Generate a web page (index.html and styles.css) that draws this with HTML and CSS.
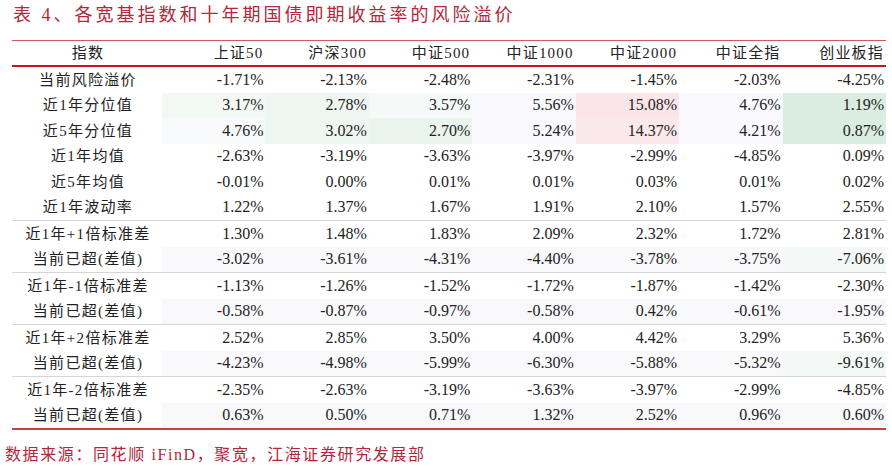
FILE: index.html
```html
<!DOCTYPE html>
<html lang="zh">
<head>
<meta charset="utf-8">
<title>表4</title>
<link rel="stylesheet" href="styles.css">
</head>
<body>
<div class="title">表 4、各宽基指数和十年期国债即期收益率的风险溢价</div>
<table class="tbl">
  <colgroup>
    <col class="c-label">
    <col class="c-val"><col class="c-val"><col class="c-val"><col class="c-val"><col class="c-val"><col class="c-val"><col class="c-val">
  </colgroup>
  <thead>
    <tr><th class="lbl">指数</th><th>上证50</th><th>沪深300</th><th>中证500</th><th>中证1000</th><th>中证2000</th><th>中证全指</th><th>创业板指</th></tr>
  </thead>
  <tbody>
    <tr><td class="lbl">当前风险溢价</td><td>-1.71%</td><td>-2.13%</td><td>-2.48%</td><td>-2.31%</td><td>-1.45%</td><td>-2.03%</td><td>-4.25%</td></tr>
    <tr><td class="lbl">近1年分位值</td><td class="g1">3.17%</td><td class="g2">2.78%</td><td class="g0">3.57%</td><td class="lv">5.56%</td><td class="p1">15.08%</td><td class="lv">4.76%</td><td class="g3">1.19%</td></tr>
    <tr><td class="lbl">近5年分位值</td><td class="lv2">4.76%</td><td class="g2">3.02%</td><td class="g2b">2.70%</td><td class="lv">5.24%</td><td class="p2">14.37%</td><td class="lv">4.21%</td><td class="g3">0.87%</td></tr>
    <tr><td class="lbl">近1年均值</td><td>-2.63%</td><td>-3.19%</td><td>-3.63%</td><td>-3.97%</td><td>-2.99%</td><td>-4.85%</td><td>0.09%</td></tr>
    <tr><td class="lbl">近5年均值</td><td>-0.01%</td><td>0.00%</td><td>0.01%</td><td>0.01%</td><td>0.03%</td><td>0.01%</td><td>0.02%</td></tr>
    <tr class="sep"><td class="lbl">近1年波动率</td><td>1.22%</td><td>1.37%</td><td>1.67%</td><td>1.91%</td><td>2.10%</td><td>1.57%</td><td>2.55%</td></tr>
    <tr><td class="lbl">近1年+1倍标准差</td><td>1.30%</td><td>1.48%</td><td>1.83%</td><td>2.09%</td><td>2.32%</td><td>1.72%</td><td>2.81%</td></tr>
    <tr class="sep ex"><td class="lbl">当前已超(差值)</td><td>-3.02%</td><td>-3.61%</td><td>-4.31%</td><td>-4.40%</td><td>-3.78%</td><td>-3.75%</td><td class="gx">-7.06%</td></tr>
    <tr><td class="lbl">近1年-1倍标准差</td><td>-1.13%</td><td>-1.26%</td><td>-1.52%</td><td>-1.72%</td><td>-1.87%</td><td>-1.42%</td><td>-2.30%</td></tr>
    <tr class="sep ex"><td class="lbl">当前已超(差值)</td><td>-0.58%</td><td>-0.87%</td><td>-0.97%</td><td>-0.58%</td><td>0.42%</td><td>-0.61%</td><td>-1.95%</td></tr>
    <tr><td class="lbl">近1年+2倍标准差</td><td>2.52%</td><td>2.85%</td><td>3.50%</td><td>4.00%</td><td>4.42%</td><td>3.29%</td><td>5.36%</td></tr>
    <tr class="sep ex"><td class="lbl">当前已超(差值)</td><td>-4.23%</td><td>-4.98%</td><td>-5.99%</td><td>-6.30%</td><td>-5.88%</td><td>-5.32%</td><td class="gx">-9.61%</td></tr>
    <tr><td class="lbl">近1年-2倍标准差</td><td>-2.35%</td><td>-2.63%</td><td>-3.19%</td><td>-3.63%</td><td>-3.97%</td><td>-2.99%</td><td>-4.85%</td></tr>
    <tr class="ex last"><td class="lbl">当前已超(差值)</td><td>0.63%</td><td>0.50%</td><td>0.71%</td><td>1.32%</td><td>2.52%</td><td>0.96%</td><td>0.60%</td></tr>
  </tbody>
</table>
<div class="source">数据来源：同花顺 iFinD，聚宽，江海证券研究发展部</div>
</body>
</html>
```

FILE: styles.css
```css
html, body {
  margin: 0;
  padding: 0;
  background: #ffffff;
}
body {
  font-family: "Liberation Serif", "Noto Sans CJK SC", serif;
  color: #222222;
  width: 892px;
  height: 466px;
  overflow: hidden;
}
.title {
  height: 40px;
  line-height: 30px;
  padding-left: 13px;
  font-size: 18px;
  letter-spacing: 3px;
  color: #b3263b;
}
.tbl {
  margin-left: 12px;
  width: 874px;
  table-layout: fixed;
  border-collapse: collapse;
  border-top: 1px solid #d45a5a;
  border-bottom: 2px solid #d03c3c;
}
.c-label { width: 150px; }
.c-val { width: 103.4px; }
.tbl th, .tbl td {
  padding: 0 2px 0 0;
  text-align: right;
  font-weight: normal;
  white-space: nowrap;
  font-size: 16px;
  line-height: 18px;
}
.tbl thead th {
  height: 24px;
  border-bottom: 2px solid #c41a1a;
  font-size: 15px;
  letter-spacing: 1.2px;
}
.tbl tbody td {
  height: 25.5px;
}
.tbl .lbl {
  text-align: center;
  padding: 0 0 0 2px;
  font-size: 15px;
  letter-spacing: 1.3px;
}
.tbl tr.sep td {
  border-bottom: 1px solid #d6d6d6;
}
.tbl tr.ex td:not(.lbl) { background: #f9f9fc; }
.tbl tr.ex td.gx { background: #f4f8f6; }
.tbl td.g0 { background: #f5f9f7; }
.tbl td.g1 { background: #f2f8f4; }
.tbl td.g2 { background: #edf6f0; }
.tbl td.g2b { background: #e9f4ed; }
.tbl td.g3 { background: #dbede1; }
.tbl td.lv { background: #faf9fd; }
.tbl td.lv2 { background: #f8f9fb; }
.tbl td.p1 { background: #fce5e8; }
.tbl td.p2 { background: #fbe8eb; }
.source {
  margin-top: 10px;
  padding-left: 5px;
  line-height: 30px;
  font-size: 16px;
  letter-spacing: 1.6px;
  color: #b3263b;
}
```
